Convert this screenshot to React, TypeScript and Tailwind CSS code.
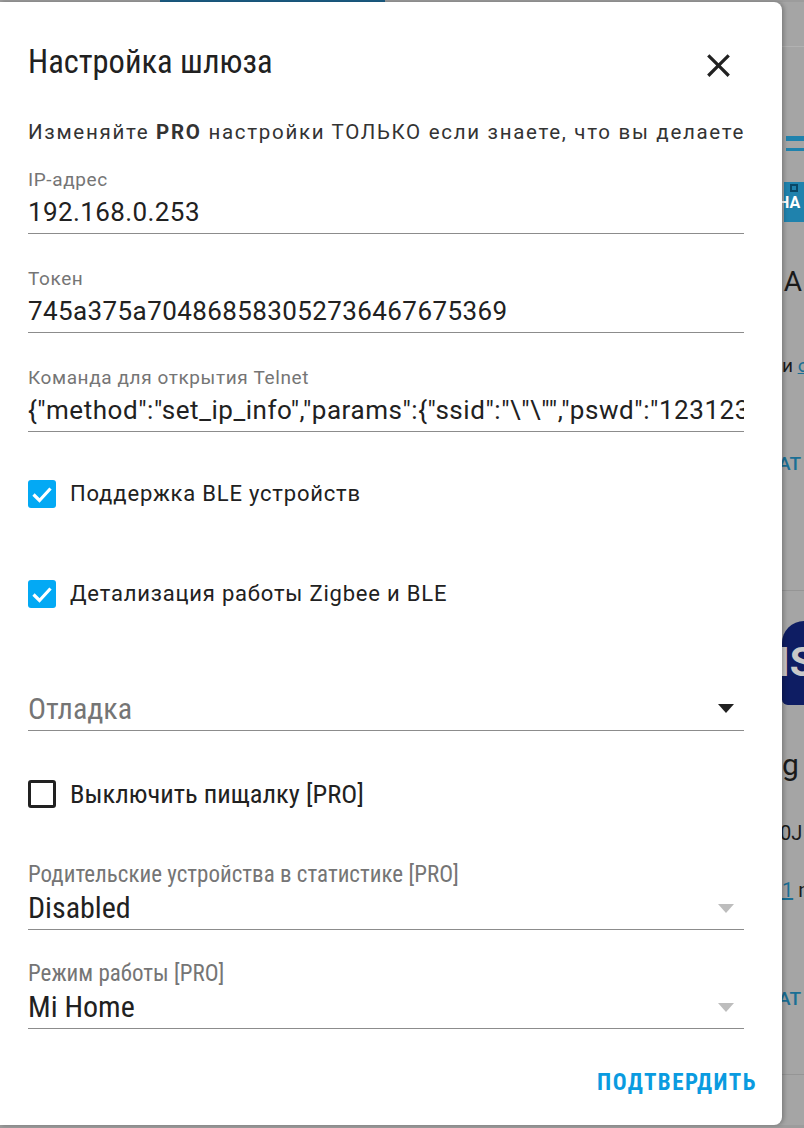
import React from "react";

const R = { fontFamily: 'Roboto, "Noto Sans", sans-serif' };
const C = { fontFamily: '"Roboto Condensed", "Liberation Sans Narrow", "DejaVu Sans Condensed", Roboto, sans-serif' };

function Check({ checked }: { checked: boolean }) {
  if (checked) {
    return (
      <div className="w-[28px] h-[28px] rounded-[3px] bg-[#03a9f4] flex items-center justify-center shrink-0">
        <svg width="24" height="24" viewBox="0 0 24 24">
          <path d="M3.5 12.5 L9.5 18.5 L20.5 6.5" fill="none" stroke="#fff" strokeWidth="3.2" />
        </svg>
      </div>
    );
  }
  return <div className="w-[28px] h-[28px] rounded-[3px] border-[3px] border-[#212121] shrink-0" />;
}

function Arrow({ color }: { color: string }) {
  return (
    <svg width="16" height="9" viewBox="0 0 16 9" className="shrink-0">
      <path d="M0 0 L16 0 L8 9 Z" fill={color} />
    </svg>
  );
}

function TextField({ label, value, wide }: { label: string; value: string; wide?: boolean }) {
  return (
    <div className="border-b border-[#8c8c8c] pb-[6px]">
      <div className="h-[20px] leading-[20px] text-[19px] tracking-[0.6px] text-[#757575] whitespace-nowrap" style={R}>{label}</div>
      <div
        className={
          wide
            ? "mt-[7px] h-[30px] leading-[30px] text-[26px] tracking-[0.55px] text-[#212121] whitespace-nowrap overflow-hidden"
            : "mt-[7px] h-[30px] leading-[30px] text-[26px] tracking-[0.4px] text-[#212121] whitespace-nowrap overflow-hidden"
        }
        style={R}
      >
        {value}
      </div>
    </div>
  );
}

function SelectField({ label, value }: { label: string; value: string }) {
  return (
    <div className="border-b border-[#8c8c8c] pb-[5px]">
      <div className="h-[20px] leading-[20px] text-[23px] text-[#757575] whitespace-nowrap" style={C}>{label}</div>
      <div className="mt-[7px] h-[32px] flex items-center justify-between pr-[10px]">
        <span className="text-[30px] leading-[32px] text-[#212121]" style={C}>{value}</span>
        <Arrow color="#bdbdbd" />
      </div>
    </div>
  );
}

function CheckRow({ checked, label, condensed }: { checked: boolean; label: string; condensed?: boolean }) {
  return (
    <div className="flex items-center h-[28px] gap-[14px]">
      <Check checked={checked} />
      <span
        className={condensed ? "text-[26.5px] leading-[28px] text-[#212121] whitespace-nowrap" : "text-[22px] leading-[28px] tracking-[0.8px] text-[#212121] whitespace-nowrap"}
        style={condensed ? C : R}
      >
        {label}
      </span>
    </div>
  );
}

function Strip() {
  return (
    <div className="w-[22px] h-full bg-[#a5a5a5] overflow-hidden flex flex-col" style={R}>
      <div className="h-[44px]" />
      <div className="h-[1px] bg-[#b2b2b2]" />
      <div className="h-[89px]" />
      <div className="h-[5px] bg-[#1f82ad] ml-[4px]" />
      <div className="h-[7px]" />
      <div className="h-[3px] bg-[#1f82ad] ml-[4px]" />
      <div className="h-[31px]" />
      <div className="h-[40px] bg-[#1f82ad] ml-[2px] flex flex-col">
        <div className="h-[8px] mx-[6px] mt-[2px] border-2 border-[#0a4766]" />
        <div className="text-[16px] leading-[22px] font-bold text-white whitespace-nowrap -ml-[6px]">НА</div>
      </div>
      <div className="h-[40px]" />
      <div className="text-[28px] leading-[40px] text-[#1a1a1a] whitespace-nowrap -ml-[6px]">IA</div>
      <div className="h-[52px]" />
      <div className="text-[19px] leading-[24px] text-[#1a1a1a] whitespace-nowrap">и <span className="text-[#1a6f95] underline">о</span></div>
      <div className="h-[74px]" />
      <div className="text-[19px] leading-[24px] font-medium text-[#1a6f95] whitespace-nowrap -ml-[4px]">АТ</div>
      <div className="h-[114px]" />
      <div className="h-[1px] bg-[#959595]" />
      <div className="h-[30px]" />
      <div className="h-[84px] bg-[#0e1d63] rounded-tl-[30px] rounded-bl-[8px] flex items-center">
        <span className="text-[40px] font-bold text-[#c9c9c9] -ml-[4px] leading-[40px]">IS</span>
      </div>
      <div className="h-[40px]" />
      <div className="text-[30px] leading-[40px] text-[#1a1a1a] whitespace-nowrap">g</div>
      <div className="h-[35px]" />
      <div className="text-[20px] leading-[26px] text-[#1a1a1a] whitespace-nowrap -ml-[2px]">0J</div>
      <div className="h-[31px]" />
      <div className="text-[20px] leading-[26px] text-[#1a1a1a] whitespace-nowrap"><span className="text-[#1a6f95] underline">1</span> n</div>
      <div className="h-[84px]" />
      <div className="text-[19px] leading-[24px] font-medium text-[#1a6f95] whitespace-nowrap -ml-[4px]">АТ</div>
      <div className="h-[63px]" />
      <div className="h-[1px] bg-[#959595]" />
    </div>
  );
}

export default function App() {
  return (
    <div className="w-[804px] h-[1128px] bg-[#a5a5a5] flex flex-col overflow-hidden">
      <div className="h-[2px] flex shrink-0">
        <div className="w-[160px] bg-[#9c9c9c]" />
        <div className="w-[225px] bg-[#1b5e86]" />
        <div className="flex-1 bg-[#9c9c9c]" />
      </div>
      <div className="flex h-[1123px] shrink-0">
        <div className="w-[782px] h-full bg-white rounded-r-[8px] shadow-[2px_0_4px_rgba(0,0,0,0.25)] flex flex-col pl-[28px] pr-[38px] z-10">
          <div className="mt-[44px] h-[32px] flex items-center justify-between">
            <h1 className="text-[32.5px] leading-[32px] text-[#212121]" style={C}>Настройка шлюза</h1>
            <svg width="39" height="39" viewBox="0 0 24 24" className="mr-[6px] mt-[6px]">
              <path
                d="M19 6.41L17.59 5 12 10.59 6.41 5 5 6.41 10.59 12 5 17.59 6.41 19 12 13.41 17.59 19 19 17.59 13.41 12z"
                fill="#212121"
              />
            </svg>
          </div>
          <p className="mt-[42px] h-[24px] leading-[24px] text-[20.5px] tracking-[1.7px] text-[#333] whitespace-nowrap" style={R}>
            Изменяйте <b className="font-bold">PRO</b> настройки ТОЛЬКО если знаете, что вы делаете
          </p>
          <div className="mt-[26px]">
            <TextField label="IP-адрес" value="192.168.0.253" />
          </div>
          <div className="mt-[35px]">
            <TextField label="Токен" value="745a375a704868583052736467675369" />
          </div>
          <div className="mt-[35px]">
            <TextField label="Команда для открытия Telnet" value={'{"method":"set_ip_info","params":{"ssid":"\\"\\"","pswd":"123123"}}'} wide />
          </div>
          <div className="mt-[48px]">
            <CheckRow checked label="Поддержка BLE устройств" />
          </div>
          <div className="mt-[72px]">
            <CheckRow checked label="Детализация работы Zigbee и BLE" />
          </div>
          <div className="mt-[84px] border-b border-[#8c8c8c] pb-[5px] h-[39px] flex items-center justify-between pr-[10px]">
            <span className="text-[30px] leading-[32px] text-[#757575]" style={C}>Отладка</span>
            <Arrow color="#212121" />
          </div>
          <div className="mt-[49px]">
            <CheckRow checked={false} label="Выключить пищалку [PRO]" condensed />
          </div>
          <div className="mt-[57px]">
            <SelectField label="Родительские устройства в статистике [PRO]" value="Disabled" />
          </div>
          <div className="mt-[34px]">
            <SelectField label="Режим работы [PRO]" value="Mi Home" />
          </div>
          <div className="mt-[42px] flex justify-end mr-[-13px]">
            <button className="text-[23px] leading-[24px] font-bold tracking-[1.5px] text-[#0a9be0]" style={C}>
              ПОДТВЕРДИТЬ
            </button>
          </div>
        </div>
        <Strip />
      </div>
      <div className="flex-1 bg-[#9c9c9c]" />
    </div>
  );
}
